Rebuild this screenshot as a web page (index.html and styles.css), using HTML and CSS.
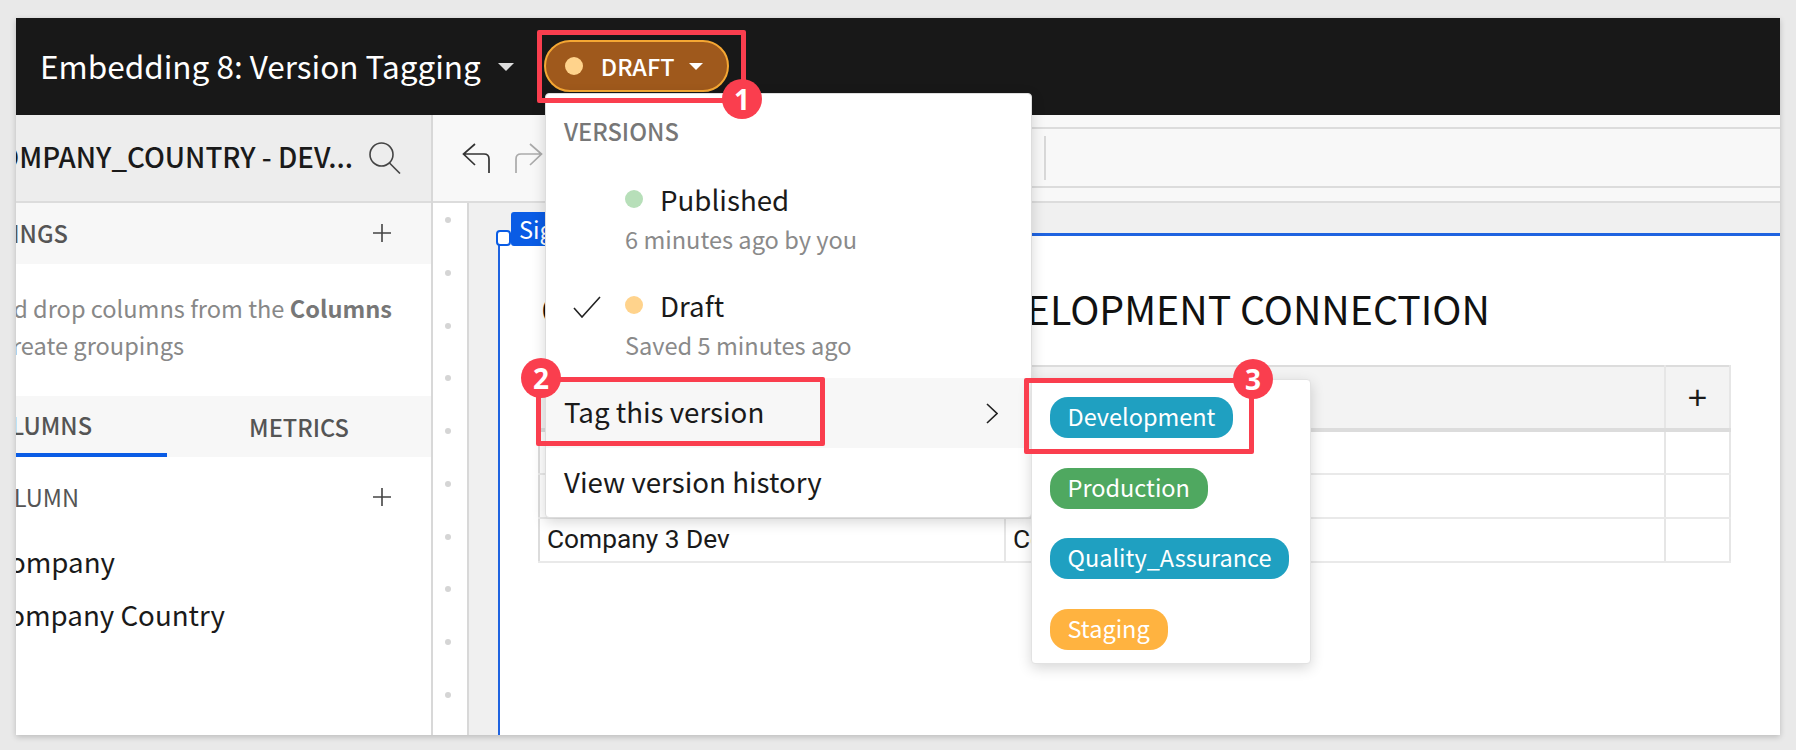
FILE: index.html
```html
<!DOCTYPE html>
<html lang="en">
<head>
  <meta charset="UTF-8">
  <title>Embedding 8: Version Tagging</title>
  <link rel="stylesheet" href="styles.css">
</head>
<body>
  <div class="frame">
    <header class="topbar">
      <span class="doc-title">Embedding 8: Version Tagging</span>
      <span class="caret doc-caret"></span>
      <span class="draft-pill">
        <span class="dot dot-draft"></span>
        <span class="draft-label">DRAFT</span>
        <span class="caret pill-caret"></span>
      </span>
    </header>

    <div class="workspace">
      <aside class="side">
        <div class="side-head">
          <span class="side-title">COMPANY_COUNTRY - DEV...</span>
          <svg class="search-icon" width="32" height="32" viewBox="0 0 32 32" fill="none" stroke="#444" stroke-width="1.6"><circle cx="12.5" cy="12.5" r="11.5"/><path d="M20.5 21 L31 31.5"/></svg>
        </div>
        <div class="side-row groupings">
          <span class="cut cut-groupings">GROUPINGS</span>
          <svg class="plus" width="20" height="20" viewBox="0 0 20 20" stroke="#444" stroke-width="1.6"><path d="M10 1V19M1 10H19"/></svg>
        </div>
        <div class="help">
          <div class="cut cut-help1"><span>Drag and drop columns from the <b>Columns</b></span></div>
          <div class="cut cut-help2">list to create groupings</div>
        </div>
        <div class="tabs">
          <div class="tab tab-active"><span class="cut cut-tab">COLUMNS</span></div>
          <div class="tab tab-other">METRICS</div>
        </div>
        <div class="side-row column-row">
          <span class="cut cut-column">COLUMN</span>
          <svg class="plus" width="20" height="20" viewBox="0 0 20 20" stroke="#444" stroke-width="1.6"><path d="M10 1V19M1 10H19"/></svg>
        </div>
        <div class="fields">
          <div class="cut cut-field1">Company</div>
          <div class="cut cut-field2">Company Country</div>
        </div>
      </aside>

      <main class="main">
        <div class="toolbar">
          <div class="history">
            <svg width="28" height="30" viewBox="0 0 28 30" fill="none" stroke="#333" stroke-width="1.7"><path d="M13 1 L1.5 11 L13 22M1.5 11H22Q27 11 27 16V30"/></svg>
            <svg width="28" height="30" viewBox="0 0 28 30" fill="none" stroke="#aaa" stroke-width="1.7"><path d="M15 1 L26.5 11 L15 22M26.5 11H6Q1 11 1 16V30"/></svg>
          </div>
          <div class="format-bar"><span class="format-sep"></span></div>
        </div>
        <div class="canvas-area">
          <div class="rail">
            <i></i><i></i><i></i><i></i><i></i><i></i><i></i><i></i><i></i><i></i>
          </div>
          <div class="page">
            <div class="canvas">
              <span class="el-label">Signal</span>
              <span class="el-handle"></span>
              <h1 class="table-title">COMPANY_COUNTRY - DEVELOPMENT CONNECTION</h1>
              <table class="data">
                <thead>
                  <tr><th class="col-a">Company</th><th class="col-b">Company Country</th><th class="col-add">+</th></tr>
                </thead>
                <tbody>
                  <tr><td>Company 1 Dev</td><td>Country 1</td><td></td></tr>
                  <tr><td>Company 2 Dev</td><td>Country 2</td><td></td></tr>
                  <tr><td>Company 3 Dev</td><td>Country 3</td><td></td></tr>
                </tbody>
              </table>
            </div>
          </div>
        </div>
      </main>
    </div>

    <div class="menu">
      <div class="menu-head">VERSIONS</div>
      <div class="version">
        <span class="check-slot"></span>
        <div>
          <div class="version-name"><span class="dot dot-published"></span>Published</div>
          <div class="version-sub">6 minutes ago by you</div>
        </div>
      </div>
      <div class="version">
        <span class="check-slot">
          <svg width="28" height="22" viewBox="0 0 28 22" fill="none" stroke="#222" stroke-width="1.6"><path d="M1 12 L9 21 L27 1"/></svg>
        </span>
        <div>
          <div class="version-name"><span class="dot dot-draft"></span>Draft</div>
          <div class="version-sub">Saved 5 minutes ago</div>
        </div>
      </div>
      <div class="menu-item menu-item-on">
        <span>Tag this version</span>
        <svg width="12" height="21" viewBox="0 0 12 21" fill="none" stroke="#222" stroke-width="1.6"><path d="M1 1 L11 10.5 L1 20"/></svg>
      </div>
      <div class="menu-item"><span>View version history</span></div>
    </div>

    <div class="submenu">
      <span class="tag tag-blue">Development</span>
      <span class="tag tag-green">Production</span>
      <span class="tag tag-blue">Quality_Assurance</span>
      <span class="tag tag-orange">Staging</span>
    </div>

    <div class="mark mark-1"></div>
    <div class="mark mark-2"></div>
    <div class="mark mark-3"></div>
    <span class="step step-1">1</span>
    <span class="step step-2">2</span>
    <span class="step step-3">3</span>
  </div>
</body>
</html>
```

FILE: styles.css
```css
* {
  box-sizing: border-box;
}
body {
  margin: 0;
  padding: 18px 16px 15px;
  height: 750px;
  overflow: hidden;
  background: #e9e9e9;
  font-family: "Noto Sans CJK JP", "Noto Sans", sans-serif;
  color: #1a1a1a;
}
.frame {
  position: relative;
  height: 717px;
  display: flex;
  flex-direction: column;
  background: #fff;
  box-shadow: 0 2px 6px rgba(0, 0, 0, 0.2);
}

/* top bar */
.topbar {
  flex: 0 0 97px;
  display: flex;
  align-items: center;
  padding-left: 24px;
  background: #181818;
  color: #fff;
}
.doc-title {
  padding-bottom: 4px;
  font-size: 31.5px;
  line-height: 42px;
}
.caret {
  flex: none;
  width: 0;
  height: 0;
  border-style: solid;
  border-color: #ddd transparent transparent;
}
.doc-caret {
  margin: 0 30px 0 17px;
  border-width: 8px 8px 0;
}
.draft-pill {
  display: flex;
  align-items: center;
  width: 185px;
  height: 52px;
  padding-left: 19px;
  margin-top: -1px;
  background: #9f591c;
  border: 2px solid #f5a733;
  border-radius: 26px;
}
.draft-label {
  margin: 0 15px 0 18px;
  font-size: 23.4px;
  font-weight: 500;
  line-height: 30px;
}
.pill-caret {
  border-width: 7px 7px 0;
  border-top-color: #fff;
}
.dot {
  display: inline-block;
  flex: none;
  width: 18px;
  height: 18px;
  border-radius: 50%;
}
.dot-draft {
  background: #ffd38c;
}
.dot-published {
  background: #b7dfb9;
}

.workspace {
  flex: 1;
  display: flex;
  min-height: 0;
}

/* left panel */
.side {
  flex: 0 0 417px;
  border-right: 2px solid #d8d8d8;
  overflow: hidden;
}
.side-head {
  display: flex;
  justify-content: flex-end;
  align-items: center;
  height: 88px;
  padding-right: 30px;
  background: #ededed;
  border-bottom: 2px solid #dcdcdc;
  white-space: nowrap;
}
.side-title {
  flex: none;
  margin-right: 16px;
  padding-bottom: 4px;
  font-size: 27.7px;
  font-weight: 500;
}
.search-icon {
  flex: none;
}
.side-row {
  display: flex;
  justify-content: space-between;
  align-items: center;
  padding-right: 39px;
  color: #555;
}
/* text that runs off the left edge of the panel: it ends at a set x */
.cut {
  display: flex;
  justify-content: flex-end;
  white-space: nowrap;
}
.cut-groupings { width: 52px; }
.cut-help1 { width: 376px; }
.cut-help2 { width: 168px; }
.cut-tab { width: 76px; }
.cut-column { width: 63px; }
.cut-field1 { width: 99px; }
.cut-field2 { width: 209px; }
.groupings {
  height: 61px;
  padding-bottom: 2px;
  background: #f7f7f7;
  font-size: 23.7px;
  font-weight: 500;
}
.help {
  height: 132px;
  padding-top: 26px;
  color: #888;
  font-size: 23.6px;
  line-height: 37px;
}
.help b {
  color: #777;
  font-weight: 700;
}
.tabs {
  display: flex;
  height: 61px;
  background: #f7f7f7;
  color: #555;
  font-size: 23.6px;
  font-weight: 500;
}
.tab {
  display: flex;
  align-items: center;
}
.tab-active {
  flex: 0 0 151px;
  border-bottom: 4px solid #0a5ce5;
}
.tab-other {
  flex: 1;
  justify-content: center;
}
.column-row {
  height: 50px;
  margin-top: 15px;
  font-size: 23.6px;
}
.fields {
  margin-top: 13px;
  font-size: 27.7px;
  line-height: 53px;
}

/* main area */
.main {
  flex: 1;
  display: flex;
  flex-direction: column;
  min-width: 0;
}
.toolbar {
  flex: 0 0 88px;
  display: flex;
  background: #f8f8f8;
  border-bottom: 2px solid #dcdcdc;
}
.history {
  flex: 0 0 127px;
  display: flex;
  gap: 25px;
  padding: 28px 0 0 29px;
}
.format-bar {
  flex: 1;
  display: flex;
  align-items: center;
  height: 61px;
  margin-top: 12px;
  padding-left: 484px;
  border-top: 2px solid #dcdcdc;
  border-bottom: 2px solid #dcdcdc;
}
.format-sep {
  width: 2px;
  height: 44px;
  background: #d8d8d8;
}
.canvas-area {
  flex: 1;
  display: flex;
  min-height: 0;
}
.rail {
  flex: 0 0 36px;
  display: flex;
  flex-direction: column;
  align-items: center;
  gap: 46.75px;
  padding: 14px 4px 0 0;
  background: #fff;
  border-right: 2px solid #d8d8d8;
  overflow: hidden;
}
.rail i {
  flex: none;
  width: 6px;
  height: 6px;
  border-radius: 50%;
  background: #d5d5d5;
}
.page {
  flex: 1;
  padding: 30px 0 0 29px;
  background: #f0f0f0;
}
.canvas {
  position: relative;
  height: 100%;
  padding: 0 0 0 38px;
  background: #fff;
  border-left: 2px solid #1f63e0;
  border-top: 3px solid #1f63e0;
}
.el-label {
  position: absolute;
  top: -24px;
  left: 11px;
  height: 34px;
  padding: 0 8px;
  background: #0a5ce5;
  border-radius: 3px;
  color: #fff;
  font-size: 23.6px;
  line-height: 34px;
}
.el-handle {
  position: absolute;
  top: -6px;
  left: -4px;
  width: 15px;
  height: 16px;
  background: #fff;
  border: 2px solid #0a5ce5;
  border-radius: 4px;
}
.table-title {
  margin: 0;
  padding: 47px 0 0 3px;
  height: 129px;
  font-size: 39.3px;
  font-weight: 400;
  line-height: 50px;
  color: #111;
  white-space: nowrap;
}
.data {
  width: 1191px;
  border-collapse: collapse;
  table-layout: fixed;
  border: 2px solid #dcdcdc;
  font-family: Roboto, sans-serif;
  font-size: 26.3px;
}
.col-a { width: 466px; }
.col-b { width: 660px; }
.col-add { width: 65px; font-family: "Liberation Sans", sans-serif; font-size: 34px; }
.data th {
  height: 64px;
  background: #f3f3f3;
  border-bottom: 4px solid #dcdcdc;
  border-right: 2px solid #e6e6e6;
  font-weight: 400;
  text-align: left;
  padding: 0 7px;
}
.data th.col-add {
  text-align: center;
}
.data td {
  height: 44px;
  padding: 0 7px 2px;
  border-bottom: 2px solid #e9e9e9;
  border-right: 2px solid #e6e6e6;
  line-height: 30px;
}

/* version menu */
.menu {
  position: absolute;
  top: 75px;
  left: 529px;
  width: 487px;
  height: 425px;
  background: #fff;
  border: 1px solid #ddd;
  border-radius: 4px;
  box-shadow: 0 4px 14px rgba(0, 0, 0, 0.16);
}
.menu-head {
  height: 73px;
  padding: 21px 0 0 18px;
  color: #777;
  font-size: 23.7px;
  font-weight: 500;
  line-height: 32px;
}
.version {
  display: flex;
  height: 105.5px;
  padding: 11px 0 0 27px;
}
.check-slot {
  flex: 0 0 52px;
  padding-top: 12px;
}
.version-name {
  display: flex;
  align-items: center;
  gap: 17px;
  font-size: 27.7px;
  line-height: 42px;
}
.version-sub {
  margin-top: 1px;
  color: #8a8a8a;
  font-size: 23.6px;
  line-height: 36px;
}
.menu-item {
  display: flex;
  justify-content: space-between;
  align-items: center;
  height: 70px;
  padding: 0 33px 0 18px;
  font-size: 27.7px;
}
.menu-item span {
  margin-top: -4px;
}
.menu-item-on {
  background: #f7f7f7;
}

/* tag submenu */
.submenu {
  position: absolute;
  top: 361px;
  left: 1015px;
  width: 280px;
  height: 285px;
  display: flex;
  flex-direction: column;
  align-items: flex-start;
  gap: 29.7px;
  padding: 17px 0 0 18px;
  background: #fff;
  border: 1px solid #e2e2e2;
  border-radius: 4px;
  box-shadow: 0 4px 14px rgba(0, 0, 0, 0.16);
}
.tag {
  height: 41px;
  padding: 0 18px 0 17.5px;
  border-radius: 18px;
  color: #fff;
  font-size: 23.5px;
  line-height: 39px;
}
.tag-blue { background: #1fa0c1; }
.tag-green { background: #4fa860; }
.tag-orange { background: #ffb340; }

/* callouts drawn over the screenshot */
.mark {
  position: absolute;
  border: 5px solid #fa3e4e;
  border-radius: 2px;
}
.mark-1 { top: 12px; left: 521px; width: 209px; height: 73px; }
.mark-2 { top: 359px; left: 520px; width: 289px; height: 69px; }
.mark-3 { top: 360px; left: 1008px; width: 230px; height: 76px; }
.step {
  position: absolute;
  width: 40px;
  height: 40px;
  border-radius: 50%;
  background: #fa3e4e;
  color: #fff;
  font-family: "Open Sans", sans-serif;
  font-size: 28px;
  font-weight: 700;
  line-height: 40px;
  text-align: center;
}
.step-1 { top: 61px; left: 706px; }
.step-2 { top: 340px; left: 505px; }
.step-3 { top: 341px; left: 1217px; }
```
